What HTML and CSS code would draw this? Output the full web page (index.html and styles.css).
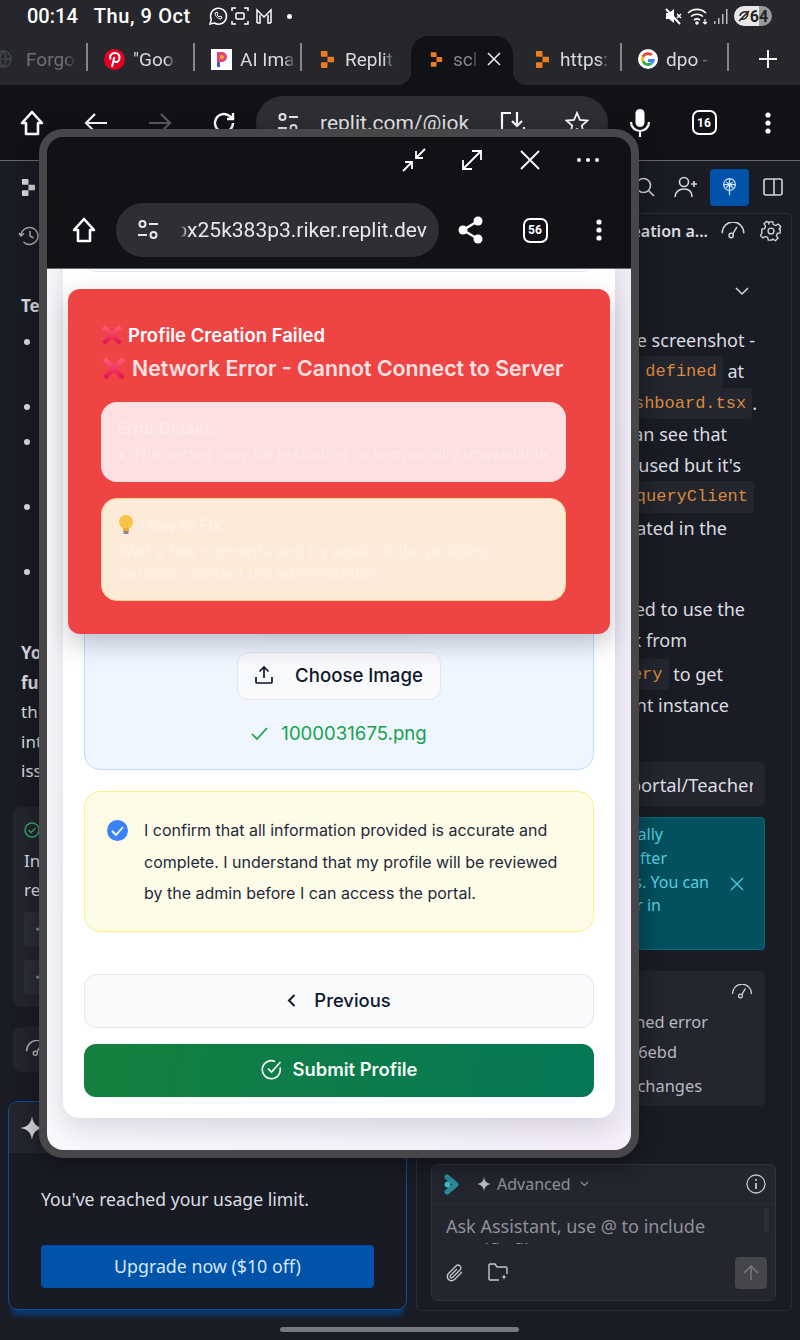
FILE: index.html
```html
<!DOCTYPE html>
<html>
<head>
  <meta charset="UTF-8">
  <meta name="viewport" content="width=device-width, initial-scale=1">
  <title>Profile Creation Failed</title>
  <link rel="stylesheet" href="styles.css">
</head>
<body>
  <!-- shared icons -->
  <svg class="defs">
    <defs>
      <linearGradient id="xGrad" x1="0" y1="0" x2="0" y2="1">
        <stop offset="0" stop-color="#ff5f7c"/>
        <stop offset="1" stop-color="#e2124f"/>
      </linearGradient>
      <symbol id="i-home" viewBox="0 0 28 28"><path d="M14 3 4 14h4v11h12V14h4z" fill="none" stroke="#fff" stroke-width="2.6" stroke-linejoin="round"/></symbol>
      <symbol id="i-tune" viewBox="0 0 24 24"><g fill="none" stroke="#e8e8ea" stroke-width="2"><circle cx="6.5" cy="6" r="3"/><path d="M13 6h9M2 17h9"/><circle cx="17.5" cy="17" r="3"/></g></symbol>
      <symbol id="i-dots" viewBox="0 0 24 24"><circle cx="12" cy="4" r="2.6" fill="#fff"/><circle cx="12" cy="12" r="2.6" fill="#fff"/><circle cx="12" cy="20" r="2.6" fill="#fff"/></symbol>
      <symbol id="i-replit" viewBox="0 0 16 20"><path d="M1 1h6a1 1 0 0 1 1 1v5H2a1 1 0 0 1-1-1zM8 7h6a1 1 0 0 1 1 1v4a1 1 0 0 1-1 1H8zM2 13h6v5a1 1 0 0 1-1 1H2a1 1 0 0 1-1-1v-4a1 1 0 0 1 1-1z" fill="currentColor"/></symbol>
      <symbol id="i-gauge" viewBox="0 0 28 20"><g fill="none" stroke="currentColor" stroke-width="1.6" stroke-linecap="round"><path d="M2 12A12 12 0 0 1 26 12"/><circle cx="12" cy="15" r="2.4"/><path d="m14 13 4-7"/></g></symbol>
      <symbol id="i-x" viewBox="0 0 24 24"><path d="M3 3 21 21M21 3 3 21" fill="none" stroke="url(#xGrad)" stroke-width="4.5"/></symbol>
      <symbol id="i-spark" viewBox="0 0 24 24"><path d="M12 1c1 7 4 10 11 11-7 1-10 4-11 11-1-7-4-10-11-11 7-1 10-4 11-11z" fill="currentColor"/></symbol>
    </defs>
  </svg>

  <div class="statusbar">
    <div class="status-left">
      <span class="clock">00:14</span>
      <span class="date">Thu, 9 Oct</span>
      <svg class="st-icons" width="68" height="20" viewBox="0 0 68 20" fill="none" stroke="#fff" stroke-width="1.5">
        <path d="M2 18l1.3-4.4A8 8 0 1 1 6.4 17z"/><path d="M7 7c0 3 3 6 6 6l1-2-2-1-1 1-2-2 1-1-1-2z" stroke-width="1"/>
        <path d="M24 5V2h4M36 2h4v3M40 15v3h-4M28 18h-4v-3"/><rect x="28" y="7" width="8" height="6" rx="1"/>
        <path d="M49 17V4l7 7 7-7v13M49 17h3V9M63 17h-3V9"/>
      </svg>
      <span class="st-dot"></span>
    </div>
    <div class="status-right">
      <svg width="20" height="20" viewBox="0 0 20 20"><path d="M3 7h3l5-4v14l-5-4H3z" fill="#fff"/><path d="m3 3 14 15" stroke="#fff" stroke-width="2"/><path d="m14 8 4 4m0-4-4 4" stroke="#fff" stroke-width="1.4"/></svg>
      <svg width="22" height="20" viewBox="0 0 22 20" fill="none" stroke="#fff" stroke-width="1.6"><path d="M1 7a13 13 0 0 1 18 0M4 10.500a9 9 0 0 1 12 0M7 14a5 5 0 0 1 6 0"/><circle cx="10" cy="17" r="1" fill="#fff"/><path d="M18 13v5m-2-2 2 2 2-2" stroke-width="1.200"/></svg>
      <svg width="16" height="20" viewBox="0 0 16 20"><path d="M1 15h1.500v3H1zM5 12h1.500v6H5zM9 8h1.500v10H9zM13 3h1.500v15H13z" fill="#b9babd"/></svg>
      <span class="battery"><svg width="12" height="12" viewBox="0 0 12 12"><path d="M1 11 11 1M2 6c0-3 4-5 8-4 0 5-3 8-7 7" fill="none" stroke="#222" stroke-width="1.500"/></svg>64</span>
    </div>
  </div>

  <div class="tabs">
    <div class="tab tab-first"><svg class="fav" width="18" height="18" viewBox="0 0 18 18" fill="none" stroke="#44464c" stroke-width="1.500"><circle cx="9" cy="9" r="8"/><path d="M1 9h16M9 1c4 5 4 11 0 16M9 1c-4 5-4 11 0 16"/></svg><span class="tab-title dim">Forgo</span></div>
    <div class="tab"><svg class="fav" width="21" height="21" viewBox="0 0 21 21"><circle cx="10.500" cy="10.500" r="10.500" fill="#e60023"/><path d="M8 18l2.300-10M6.500 10.500C5 6 8 4 11 4s5 2 4.500 5.500S12 14 10 12" fill="none" stroke="#fff" stroke-width="2"/></svg><span class="tab-title">"Goo</span></div>
    <div class="tab"><svg class="fav" width="21" height="21" viewBox="0 0 21 21"><rect width="21" height="21" fill="#fff"/><path d="M6 3h5a5 5 0 0 1 0 10H9v5H6z" fill="#e0457b"/><path d="M9 6h2a2 2 0 0 1 0 4H9z" fill="#f5a623"/><path d="M6 13h3v5H6z" fill="#3b5bdb"/></svg><span class="tab-title">AI Ima</span></div>
    <div class="tab tab-replit"><svg class="fav" width="15" height="19"><use href="#i-replit"/></svg><span class="tab-title">Replit</span></div>
    <div class="tab tab-active tab-replit"><svg class="fav" width="13" height="17"><use href="#i-replit"/></svg><span class="tab-title short">scl</span>
      <svg class="tab-x" width="14" height="14" viewBox="0 0 14 14"><path d="m1 1 12 12M13 1 1 13" stroke="#e8e8ea" stroke-width="1.600"/></svg></div>
    <div class="tab tab-replit tab-after"><svg class="fav" width="15" height="19"><use href="#i-replit"/></svg><span class="tab-title">https:</span></div>
    <div class="tab"><svg class="fav" width="20" height="20" viewBox="0 0 20 20"><circle cx="10" cy="10" r="10" fill="#fff"/><path d="M10 6a4 4 0 0 1 2.800 1.100l2-2A7 7 0 0 0 3.700 7l2.400 1.800A4 4 0 0 1 10 6z" fill="#ea4335"/><path d="M6.100 8.800 3.700 7a7 7 0 0 0 0 6l2.400-1.800a4 4 0 0 1 0-2.400z" fill="#fbbc05"/><path d="M10 14a4 4 0 0 1-3.900-2.800L3.700 13a7 7 0 0 0 11 2.100l-2.300-1.800A4 4 0 0 1 10 14z" fill="#34a853"/><path d="M17 10h-7v3h4a3 3 0 0 1-1.600 0.300l2.300 1.800A7 7 0 0 0 17 10z" fill="#4285f4"/></svg><span class="tab-title">dpo -</span></div>
    <div class="tab-plus"><svg width="20" height="20" viewBox="0 0 20 20"><path d="M10 1v18M1 10h18" stroke="#f2f2f2" stroke-width="2"/></svg></div>
  </div>

  <div class="toolbar">
    <div class="tool"><svg width="28" height="28"><use href="#i-home"/></svg></div>
    <div class="tool"><svg width="26" height="24" viewBox="0 0 26 24" fill="none" stroke="#fff" stroke-width="2.200"><path d="M24 12H3M12 3l-9 9 9 9"/></svg></div>
    <div class="tool"><svg width="26" height="24" viewBox="0 0 26 24" fill="none" stroke="#5b5c61" stroke-width="2.200"><path d="M2 12h21M14 3l9 9-9 9"/></svg></div>
    <div class="tool"><svg width="26" height="26" viewBox="0 0 26 26" fill="none" stroke="#fff" stroke-width="2.400"><path d="M22 13a9 9 0 1 1-3-6.700L22 9M22 3v6h-6"/></svg></div>
    <div class="url-pill">
      <div class="tool"><svg width="24" height="24"><use href="#i-tune"/></svg></div>
      <span class="url-text">replit.com/@jok</span>
      <div class="pill-end">
        <svg width="28" height="26" viewBox="0 0 28 26" fill="none" stroke="#fff" stroke-width="2.200"><path d="M12 3H3v20h22v-6M18 2v14M13 11l5 5 5-5"/></svg>
        <svg width="24" height="24" viewBox="0 0 24 24" fill="none" stroke="#fff" stroke-width="1.800"><path d="m12 2 3 7 7.500.6-5.700 5 1.800 7.400L12 18l-6.600 4 1.800-7.400-5.700-5L9 9z"/></svg>
      </div>
    </div>
    <div class="tool"><svg width="22" height="30" viewBox="0 0 22 30"><rect x="6.500" y="1" width="9" height="18" rx="4.500" fill="#fff"/><path d="M2 14a9 9 0 0 0 18 0M11 23v6" fill="none" stroke="#fff" stroke-width="2.200"/></svg></div>
    <div class="tool"><span class="tab-count">16</span></div>
    <div class="tool"><svg width="24" height="24"><use href="#i-dots"/></svg></div>
  </div>

  <div class="replit">
    <div class="topbar">
      <svg class="top-logo" width="15" height="19"><use href="#i-replit"/></svg>
      <div class="top-right">
        <svg width="20" height="20" viewBox="0 0 20 20" fill="none" stroke="#d5d6da" stroke-width="1.600"><circle cx="8.500" cy="8.500" r="7"/><path d="m14 14 5 5"/></svg>
        <svg class="top-invite" width="24" height="22" viewBox="0 0 24 22" fill="none" stroke="#d5d6da" stroke-width="1.600"><circle cx="10" cy="6" r="4.500"/><path d="M1 21c0-5 4-8 9-8s8 3 8 8M20 5v6M17 8h6"/></svg>
        <span class="top-blue"><svg width="15" height="20" viewBox="0 0 18 22" fill="none" stroke="#cfe2f8" stroke-width="1.500"><circle cx="9" cy="8" r="7"/><path d="M2 8h14M9 1v20M5 5c2 3 6 3 8 0M5 12l4-4 4 4"/></svg></span>
        <svg class="top-split" width="20" height="20" viewBox="0 0 20 20" fill="none" stroke="#d5d6da" stroke-width="1.600"><rect x="1" y="2" width="18" height="16" rx="2"/><path d="M11 2v16"/></svg>
      </div>
    </div>

    <div class="workspace">
      <div class="left-pane">
        <svg class="history" width="22" height="20" viewBox="0 0 22 20" fill="none" stroke="#a9abb2" stroke-width="1.500"><path d="M3 10a8.500 8.500 0 1 1 2.500 6M1 7l2 3 3-2.500M12 5v5l3.500 2"/></svg>
        <p class="left-head">Te</p>
        <ul class="left-list">
          <li class="li-two"></li>
          <li></li>
          <li class="li-two"></li>
          <li class="li-two"></li>
          <li class="li-two"></li>
        </ul>
        <p class="left-para"><b>Yo<br>fu</b><br>th<br>int<br>iss</p>
        <div class="check-card">
          <svg width="16" height="16" viewBox="0 0 16 16" fill="none" stroke="#2fb36f" stroke-width="1.300"><circle cx="8" cy="8" r="7"/><path d="m4.500 8 2.500 2.500 4.500-4.500"/></svg>
          <p class="check-text">In<br>re</p>
          <div class="check-sub">✓</div>
          <div class="check-sub">✓</div>
        </div>
        <div class="gauge-card"><svg width="24" height="18"><use href="#i-gauge"/></svg></div>
        <div class="limit">
          <div class="limit-head"><svg width="26" height="26"><use href="#i-spark"/></svg></div>
          <p class="limit-text">You've reached your usage limit.</p>
          <div class="limit-btn">Upgrade now ($10 off)</div>
        </div>
      </div>

      <div class="right-pane">
        <div class="pane-head">
          <span class="pane-title">eation a...</span>
          <svg class="pane-gauge" width="26" height="18"><use href="#i-gauge"/></svg>
          <svg width="22" height="22" viewBox="0 0 24 24" fill="none" stroke="#d5d6da" stroke-width="1.500"><circle cx="12" cy="12" r="3.200"/><path d="M10 2h4l.6 3 2.600 1.100 2.600-1.700 2.800 2.800-1.700 2.600L22 10v4l-3 .6-1.100 2.600 1.700 2.600-2.800 2.800-2.600-1.700-.6.100-.6 1h-4l-.6-3-2.600-1.100-2.600 1.700-2.800-2.800 1.700-2.600L2 14v-4l3-.6 1.100-2.600-1.700-2.600 2.800-2.800 2.600 1.700L9.400 5z"/></svg>
        </div>
        <div class="pane-chevron"><svg width="14" height="9" viewBox="0 0 14 9" fill="none" stroke="#d5d6da" stroke-width="1.500"><path d="m1 1 6 6 6-6"/></svg></div>

        <div class="chat">
          <p class="ln e10">e screenshot -</p>
          <p class="ln e21"><code class="code">defined</code>&nbsp;at</p>
          <p class="ln e8"><code class="code">shboard.tsx</code>.</p>
          <p class="ln e38">an see that</p>
          <p class="ln e24">used but it's</p>
          <p class="ln e11"><code class="code">queryClient</code></p>
          <p class="ln e38">ated in the</p>
          <p class="ln gap-line"></p>
          <p class="ln e20">ed to use the</p>
          <p class="ln e78">k from</p>
          <p class="ln e42 code-line"><code class="code">ery</code>&nbsp;to get</p>
          <p class="ln e36">nt instance</p>
        </div>

        <div class="path-box"><span class="path-clip"><span class="path-text">portal/Teacher</span></span></div>

        <div class="teal-box">
          <div class="teal-lines">
            <p class="ln t2">ally</p>
            <p class="ln t1">after</p>
            <p class="ln t3">s. You can</p>
            <p class="ln t4">r in</p>
          </div>
          <svg class="teal-x" width="14" height="14" viewBox="0 0 14 14"><path d="m1 1 12 12M13 1 1 13" stroke="#4fcbdc" stroke-width="1.400"/></svg>
        </div>

        <div class="result-card">
          <svg class="result-gauge" width="22" height="16"><use href="#i-gauge"/></svg>
          <p class="ln r1">ined error</p>
          <p class="ln r2">6ebd</p>
          <p class="ln r3">changes</p>
        </div>

        <div class="composer">
          <div class="composer-head">
            <svg class="composer-logo" width="15" height="21" viewBox="0 0 15 21"><path d="M3 3 12 10.500 3 18" fill="none" stroke="#2a8c9a" stroke-width="5" stroke-linecap="round" stroke-linejoin="round"/><circle cx="3.500" cy="10.500" r="3" fill="#3fb6c6"/></svg>
            <svg class="composer-spark" width="16" height="16"><use href="#i-spark"/></svg>
            <span class="composer-mode">Advanced</span>
            <svg width="9" height="6" viewBox="0 0 9 6" fill="none" stroke="#8f9199" stroke-width="1.200"><path d="m1 1 3.500 3.500L8 1"/></svg>
            <svg class="composer-info" width="20" height="20" viewBox="0 0 20 20" fill="none" stroke="#c5c6cb" stroke-width="1.300"><circle cx="10" cy="10" r="9"/><path d="M10 9v6M10 5v1.800" stroke-width="1.800"/></svg>
          </div>
          <div class="composer-input">Ask Assistant, use @ to include<br>specific files</div>
          <div class="composer-foot">
            <svg width="20" height="20" viewBox="0 0 20 20" fill="none" stroke="#c5c6cb" stroke-width="1.400"><path d="M17 9 9.500 16.500a4 4 0 0 1-6-6L11 3a2.700 2.700 0 0 1 4 4l-7.500 7.500a1.300 1.300 0 0 1-2-2L12 6"/></svg>
            <svg class="foot-folder" width="21" height="20" viewBox="0 0 21 20" fill="none" stroke="#c5c6cb" stroke-width="1.400"><path d="M11 17H2a1 1 0 0 1-1-1V2a1 1 0 0 1 1-1h5l2 3h9a1 1 0 0 1 1 1v6"/><path d="M16 11c.3 2 1 2.700 3 3-2 .3-2.700 1-3 3-.3-2-1-2.700-3-3 2-.3 2.700-1 3-3z" fill="#c5c6cb" stroke="none"/></svg>
            <span class="send"><svg width="16" height="16" viewBox="0 0 16 16" fill="none" stroke="#77787d" stroke-width="1.500"><path d="M8 15V1M1 8l7-7 7 7"/></svg></span>
          </div>
        </div>
      </div>
    </div>
  </div>

  <div class="home-bar"></div>

  <!-- floating preview window -->
  <div class="window">
    <div class="win-head">
      <div class="win-controls">
        <span class="win-ctl"><svg width="26" height="26" viewBox="0 0 26 26" fill="none" stroke="#fff" stroke-width="1.800"><path d="M24 2 15 11M15 4v7h7M2 24l9-9M4 15h7v7"/></svg></span>
        <span class="win-ctl"><svg width="24" height="24" viewBox="0 0 24 24" fill="none" stroke="#fff" stroke-width="1.800"><path d="M3 21 21 3M12 3h9v9M3 12v9h9"/></svg></span>
        <span class="win-ctl"><svg width="22" height="22" viewBox="0 0 22 22" fill="none" stroke="#fff" stroke-width="1.800"><path d="m2 2 18 18M20 2 2 20"/></svg></span>
        <span class="win-ctl"><svg width="24" height="6" viewBox="0 0 24 6" fill="#fff"><circle cx="3" cy="3" r="2"/><circle cx="12" cy="3" r="2"/><circle cx="21" cy="3" r="2"/></svg></span>
      </div>
      <div class="win-bar">
        <div class="win-home"><svg width="28" height="28"><use href="#i-home"/></svg></div>
        <div class="win-pill">
          <div class="tool"><svg width="24" height="24"><use href="#i-tune"/></svg></div>
          <div class="win-url"><span>ox25k383p3.riker.replit.dev</span></div>
        </div>
        <div class="tool"><svg width="26" height="28" viewBox="0 0 26 28" fill="#fff"><circle cx="20" cy="5" r="4.500"/><circle cx="20" cy="23" r="4.500"/><circle cx="5" cy="14" r="4.500"/><path d="M20 5 5 14l15 9" fill="none" stroke="#fff" stroke-width="2.400"/></svg></div>
        <div class="tool"><span class="tab-count">56</span></div>
        <div class="tool"><svg width="24" height="24"><use href="#i-dots"/></svg></div>
      </div>
    </div>

    <div class="win-page">
      <div class="card">
        <div class="prev-field"></div>

        <div class="upload-box">
          <div class="preview"></div>
          <button class="choose-btn">
            <svg width="18" height="18" viewBox="0 0 18 18" fill="none" stroke="#0f172a" stroke-width="1.700"><path d="M1 11v5a1 1 0 0 0 1 1h14a1 1 0 0 0 1-1v-5M9 12V1M4.500 5.500 9 1l4.500 4.500"/></svg>
            <span>Choose Image</span>
          </button>
          <div class="file-name">
            <svg width="17" height="13" viewBox="0 0 17 13" fill="none" stroke="#16a34a" stroke-width="1.700"><path d="m1 7 5 5L16 1"/></svg>
            <span>1000031675.png</span>
          </div>
        </div>

        <div class="confirm-box">
          <span class="confirm-check"><svg width="13" height="10" viewBox="0 0 13 10" fill="none" stroke="#fff" stroke-width="1.800"><path d="m1 5 4 4 7-8"/></svg></span>
          <p>I confirm that all information provided is accurate and complete. I understand that my profile will be reviewed by the admin before I can access the portal.</p>
        </div>

        <button class="btn-prev">
          <svg width="9" height="13" viewBox="0 0 9 13" fill="none" stroke="#0f172a" stroke-width="2"><path d="M7.500 1 2 6.500 7.500 12"/></svg>
          <span>Previous</span>
        </button>
        <button class="btn-submit">
          <svg width="21" height="21" viewBox="0 0 21 21" fill="none" stroke="#fff" stroke-width="1.600"><path d="M19 8.500A9 9 0 1 1 14 2.500M7 9.500l3.500 3.500L19.500 3"/></svg>
          <span>Submit Profile</span>
        </button>
      </div>
    </div>

    <div class="toast">
      <div class="toast-title"><svg width="22" height="22"><use href="#i-x"/></svg><span>Profile Creation Failed</span></div>
      <div class="toast-error"><svg width="26" height="25"><use href="#i-x"/></svg><span>Network Error - Cannot Connect to Server</span></div>
      <div class="toast-details">
        <p class="details-title">Error Details:</p>
        <p class="details-item"><span class="bullet">•</span>The server may be restarting or temporarily unavailable</p>
      </div>
      <div class="toast-tips">
        <p class="tips-title"><svg width="16" height="20" viewBox="0 0 16 20"><circle cx="8" cy="7" r="7" fill="#fbc24a"/><path d="M5 13h6v3H5z" fill="#f0a830"/><path d="M5.500 16h5v3h-5z" fill="#8a8a94"/></svg><span>How to Fix:</span></p>
        <p class="tips-text">Wait a few moments and try again. If the problem persists, contact the administrator.</p>
      </div>
    </div>
  </div>
</body>
</html>
```

FILE: styles.css
```css
* {
  box-sizing: border-box;
}

html, body {
  margin: 0;
  padding: 0;
}

body {
  position: relative;
  width: 800px;
  height: 1340px;
  overflow: hidden;
  background-color: #1a1c25;
  font-family: "Noto Sans", sans-serif;
  color: #dcdde2;
}

p {
  margin: 0;
}

.defs {
  position: absolute;
  width: 0;
  height: 0;
}

/* status bar */
.statusbar {
  height: 36px;
  background-color: #25272c;
  padding: 0 28px 4px 27px;
  display: flex;
  justify-content: space-between;
  align-items: center;
  font-family: Roboto, sans-serif;
  font-weight: 500;
  font-size: 20px;
  color: #fff;
}

.status-left, .status-right {
  display: flex;
  align-items: center;
}

.date {
  margin-left: 16px;
  letter-spacing: 0.6px;
}

.st-icons {
  margin-left: 17px;
}

.st-dot {
  width: 5px;
  height: 5px;
  margin-left: 11px;
  border-radius: 50%;
  background-color: #fff;
}

.status-right {
  gap: 4px;
}

.battery {
  display: flex;
  align-items: center;
  justify-content: center;
  width: 38px;
  height: 20px;
  margin-left: 1px;
  border-radius: 10px;
  background: linear-gradient(90deg, #e8e8e8 65%, #9a9a9a 65%);
  color: #222;
  font-size: 16px;
  font-weight: 700;
}

/* tabs */
.tabs {
  height: 49px;
  background-color: #25272c;
  display: flex;
  font-family: Roboto, sans-serif;
  font-size: 19px;
  color: #d9dadd;
}

.tab {
  position: relative;
  width: 107px;
  flex: none;
  display: flex;
  align-items: center;
  padding: 0 0 3px 16px;
  gap: 8px;
}

.tab::after {
  content: "";
  position: absolute;
  right: 0;
  top: 7px;
  height: 28px;
  width: 2px;
  background-color: #85868a;
}

.tab-first {
  width: 88px;
  padding-left: 0;
  gap: 14px;
}

.tab-first .fav {
  margin-left: -6px;
}

.tab-title {
  white-space: nowrap;
  -webkit-mask-image: linear-gradient(90deg, #000 80%, rgba(0, 0, 0, 0.15));
  mask-image: linear-gradient(90deg, #000 80%, rgba(0, 0, 0, 0.15));
}

.dim {
  color: #6f7075;
}

.tab-replit {
  padding-left: 18px;
}

.tab-replit .fav {
  color: #ee7a22;
  margin-right: 2px;
}

.tab-active {
  width: 102px;
  margin-left: 2px;
  padding-left: 19px;
  background-color: #111216;
  border-radius: 18px 18px 0 0;
}

.tab-active .tab-title {
  color: #85868a;
}

.tab:nth-child(4)::after {
  display: none;
}

/* flared corners of the active tab */
.tab-active::before, .tab-active::after {
  content: "";
  display: block;
  position: absolute;
  top: auto;
  bottom: 0;
  width: 14px;
  height: 14px;
  background-color: transparent;
}

.tab-active::before {
  left: -14px;
  background: radial-gradient(circle at 0 0, transparent 14px, #111216 14.500px);
}

.tab-active::after {
  right: -14px;
  background: radial-gradient(circle at 100% 0, transparent 14px, #111216 14.500px);
}

.tab-x {
  margin-left: 2px;
}

.tab-after {
  width: 109px;
  padding-left: 22px;
}

.tab-plus {
  margin-left: 29px;
  padding-bottom: 3px;
  display: flex;
  align-items: center;
}

/* browser toolbar */
.toolbar {
  height: 76px;
  background-color: #111216;
  border-bottom: 1px solid #6a6b70;
  display: flex;
  align-items: center;
  font-family: Roboto, sans-serif;
}

.tool {
  width: 64px;
  flex: none;
  display: flex;
  align-items: center;
  justify-content: center;
}

.url-pill {
  width: 352px;
  height: 54px;
  flex: none;
  border-radius: 27px;
  background-color: #2e2f33;
  display: flex;
  align-items: center;
}

.url-text {
  font-size: 21px;
  color: #e8e8ea;
  white-space: nowrap;
}

.pill-end {
  margin-left: auto;
  width: 128px;
  display: flex;
  justify-content: space-around;
  align-items: center;
}

.tab-count {
  width: 25px;
  height: 25px;
  border: 2.500px solid #fff;
  border-radius: 7px;
  display: flex;
  align-items: center;
  justify-content: center;
  font-size: 12px;
  font-weight: 700;
  color: #fff;
}

/* replit editor */
.topbar {
  height: 52px;
  display: flex;
  align-items: center;
  padding: 0 17px 0 21px;
  justify-content: space-between;
}

.top-logo {
  color: #d5d6da;
}

.top-right {
  display: flex;
  align-items: center;
}

.top-invite {
  margin-left: 19px;
}

.top-blue {
  width: 39px;
  height: 37px;
  margin-left: 12px;
  border-radius: 4px;
  background-color: #0053a8;
  display: flex;
  align-items: center;
  justify-content: center;
}

.top-split {
  margin-left: 14px;
}

.workspace {
  display: flex;
  padding: 0 8px;
  gap: 9px;
}

.left-pane {
  width: 399px;
  flex: none;
  display: flex;
  flex-direction: column;
  font-size: 17px;
}

.history {
  margin: 13px 0 0 10px;
}

.left-head {
  margin: 45px 0 0 13px;
  font-weight: 700;
  line-height: 30px;
}

.left-list {
  list-style: none;
  margin: 0;
  padding: 6px 0 0 37px;
  display: flex;
  flex-direction: column;
  gap: 5px;
}

.left-list li {
  position: relative;
  height: 30px;
}

.left-list .li-two {
  height: 60px;
}

.left-list li::before {
  content: "";
  position: absolute;
  left: -21px;
  top: 12px;
  width: 6px;
  height: 6px;
  border-radius: 50%;
  background-color: #dcdde2;
}

.left-para {
  margin: 21px 0 0 13px;
  line-height: 29.500px;
}

.check-card {
  margin: 21px 0 0 5px;
  height: 200px;
  padding: 13px 11px;
  border-radius: 8px;
  background-color: #23252f;
}

.check-text {
  line-height: 29px;
  margin-top: 3px;
}

.check-sub {
  height: 35px;
  margin-top: 13px;
  padding: 5px 10px;
  border-radius: 4px;
  background-color: #2b2d38;
  color: #9a9ca3;
  font-size: 14px;
}

.check-sub:first-of-type {
  margin-top: 8px;
}

.gauge-card {
  margin: 20px 0 0 5px;
  height: 45px;
  padding: 13px 12px;
  border-radius: 8px;
  background-color: #23252f;
  color: #b8bac0;
}

.limit {
  margin-top: 29px;
  height: 209px;
  border: 1px solid #0f4f9a;
  border-radius: 10px;
  box-shadow: 0 9px 5px -3px #0d3768;
  background-color: #191b24;
}

.limit-head {
  height: 51px;
  padding: 13px 10px;
  background-color: #23252f;
  border-radius: 9px 9px 0 0;
  color: #d8d8dc;
}

.limit-text {
  margin: 34px 0 0 32px;
  font-size: 17.650px;
  line-height: 24px;
  color: #dcdde2;
}

.limit-btn {
  margin: 34px 0 0 32px;
  width: 333px;
  height: 43px;
  border-radius: 4px;
  background-color: #0053a8;
  color: #d5e6fb;
  font-size: 17.800px;
  display: flex;
  align-items: center;
  justify-content: center;
}

.right-pane {
  width: 376px;
  height: 1098px;
  flex: none;
  border: 1px solid #2b2e39;
  border-radius: 6px;
  overflow: hidden;
  display: flex;
  flex-direction: column;
  font-size: 18px;
  position: relative;
}

.pane-head {
  height: 34px;
  padding-right: 9px;
  display: flex;
  align-items: center;
  justify-content: flex-end;
  font-size: 16px;
  font-weight: 600;
  white-space: nowrap;
}

.pane-gauge {
  margin: 0 14px 0 12px;
  color: #d5d6da;
}

.pane-chevron {
  height: 26px;
  margin-top: 30px;
  padding-right: 42px;
  display: flex;
  justify-content: flex-end;
  align-items: center;
}

.chat {
  margin-top: 21px;
  padding-right: 26px;
  line-height: 31.300px;
}

.ln {
  display: flex;
  justify-content: flex-end;
  align-items: center;
  white-space: nowrap;
}

.e8 { padding-right: 8px; }
.e10 { padding-right: 10px; }
.e11 { padding-right: 11px; }
.e20 { padding-right: 20px; }
.e21 { padding-right: 21px; }
.e24 { padding-right: 24px; }
.e36 { padding-right: 36px; }
.e38 { padding-right: 38px; }
.e42 { padding-right: 42px; }
.e78 { padding-right: 78px; }

.gap-line {
  height: 50px;
}

.code-line {
  margin-top: 2px;
}

.code {
  font-family: "Liberation Mono", monospace;
  font-size: 17px;
  color: #d98a3d;
  background-color: #23252f;
  border-radius: 4px;
  padding: 0 6px;
}

.path-box {
  margin: 41px 26px 0 40px;
  height: 44px;
  padding-right: 12px;
  border-radius: 6px;
  background-color: #23252f;
  display: flex;
  justify-content: flex-end;
  align-items: center;
  white-space: nowrap;
  font-size: 18.400px;
}

.path-clip {
  width: 130px;
  overflow: hidden;
  display: flex;
  justify-content: flex-end;
}

.path-text {
  flex: none;
  margin-right: -3px;
}

.teal-box {
  margin: 11px 26px 0 40px;
  height: 133px;
  border: 1px solid #0a6a7a;
  border-radius: 4px;
  background-color: #03505f;
  color: #54cfe0;
  font-size: 16px;
  position: relative;
  padding-top: 5px;
}

.teal-lines {
  line-height: 23.700px;
}

.t1 { padding-right: 97px; }
.t2 { padding-right: 101px; }
.t3 { padding-right: 55px; }
.t4 { padding-right: 103px; }

.teal-x {
  position: absolute;
  right: 20px;
  top: 59px;
}

.result-card {
  margin: 21px 26px 0 40px;
  height: 135px;
  border-radius: 6px;
  background-color: #23252f;
  color: #b8bac0;
  font-size: 16.400px;
  position: relative;
  padding-top: 39px;
}

.result-gauge {
  position: absolute;
  right: 12px;
  top: 13px;
  color: #d5d6da;
}

.r1 { padding-right: 57px; line-height: 24px; }
.r2 { padding-right: 88px; line-height: 24px; margin-top: 6px; }
.r3 { padding-right: 63px; line-height: 24px; margin-top: 10px; }

.composer {
  position: absolute;
  left: 14px;
  top: 950px;
  width: 345px;
  height: 137px;
  border: 1px solid #30323e;
  border-radius: 6px;
  background-color: #23252f;
}

.composer-head {
  height: 39px;
  padding: 0 9px 0 12px;
  border-bottom: 1px solid #2b2d38;
  display: flex;
  align-items: center;
}

.composer-spark {
  margin-left: 17px;
  color: #b8bac0;
}

.composer-mode {
  margin: 0 9px 0 5px;
  font-size: 16px;
  color: #8f9199;
}

.composer-info {
  margin-left: auto;
}

.composer-input {
  position: relative;
  height: 40px;
  padding: 10px 14px 0;
  overflow: hidden;
  font-size: 18px;
  line-height: 24px;
  color: #8f9199;
  white-space: nowrap;
}

/* scrollbar thumb of the input */
.composer-input::after {
  content: "";
  position: absolute;
  right: 6px;
  top: 4px;
  width: 5px;
  height: 24px;
  background-color: #2b2d38;
}

.composer-foot {
  height: 55px;
  padding: 3px 8px 0 13px;
  display: flex;
  align-items: center;
}

.foot-folder {
  margin-left: 23px;
}

.send {
  width: 32px;
  height: 32px;
  margin-left: auto;
  border-radius: 4px;
  background-color: #45464a;
  display: flex;
  align-items: center;
  justify-content: center;
}

.home-bar {
  position: absolute;
  left: 280px;
  top: 1327px;
  width: 239px;
  height: 5px;
  border-radius: 3px;
  background-color: #77787d;
}

/* floating window */
.window {
  position: absolute;
  left: 39px;
  top: 129px;
  width: 600px;
  height: 1029px;
  border: 8px solid #47474a;
  border-radius: 24px;
  overflow: hidden;
  background-color: #111216;
  display: flex;
  flex-direction: column;
  font-family: Inter, sans-serif;
  box-shadow: 0 6px 24px rgba(0, 0, 0, 0.4);
}

.win-head {
  height: 132px;
  flex: none;
  border-bottom: 1px solid #6a6b70;
  font-family: Roboto, sans-serif;
}

.win-controls {
  height: 46px;
  padding-right: 14px;
  display: flex;
  justify-content: flex-end;
  align-items: center;
}

.win-ctl {
  width: 58px;
  display: flex;
  justify-content: center;
  align-items: center;
}

.win-bar {
  margin-top: 20px;
  height: 54px;
  display: flex;
  align-items: center;
}

.win-home {
  width: 69px;
  flex: none;
  display: flex;
  justify-content: center;
  padding-left: 5px;
}

.win-pill {
  width: 323px;
  height: 54px;
  flex: none;
  border-radius: 27px;
  background-color: #2e2f33;
  display: flex;
  align-items: center;
}

.win-url {
  width: 247px;
  flex: none;
  display: flex;
  justify-content: flex-end;
  overflow: hidden;
  white-space: nowrap;
  font-size: 21px;
  color: #e8e8ea;
  -webkit-mask-image: linear-gradient(90deg, transparent, #000 8px);
  mask-image: linear-gradient(90deg, transparent, #000 8px);
}

.win-page {
  flex: 1;
  min-height: 0;
  overflow: hidden;
  display: flex;
  flex-direction: column;
  justify-content: flex-end;
  padding: 0 16px 32px;
  background: linear-gradient(100deg, #fcfcfe, #f5f0fb);
}

.card {
  flex: none;
  padding: 0 21px 21px;
  border-radius: 16px;
  background-color: #fff;
  box-shadow: 0 10px 30px rgba(30, 30, 60, 0.16);
  display: flex;
  flex-direction: column;
}

.prev-field {
  height: 60px;
  border: 1px solid #e2e8f0;
  border-radius: 12px;
}

.upload-box {
  margin-top: 28px;
  height: 470px;
  border: 1px solid #bfdbfe;
  border-radius: 16px;
  background-color: #eff6ff;
  display: flex;
  flex-direction: column;
  align-items: center;
  justify-content: flex-end;
  padding-bottom: 24px;
}

.preview {
  width: 160px;
  height: 120px;
  margin-bottom: 30px;
  border-radius: 12px;
  background-color: #e2e8f0;
  box-shadow: 0 4px 16px rgba(30, 40, 70, 0.25);
}

.choose-btn {
  width: 204px;
  height: 48px;
  padding: 0 0 3px;
  border: 1px solid #e2e8f0;
  border-radius: 12px;
  background-color: #f8fafc;
  font-family: Inter, sans-serif;
  font-size: 18.600px;
  font-weight: 500;
  color: #0f172a;
  display: flex;
  align-items: center;
  justify-content: center;
  gap: 22px;
}

.file-name {
  margin-top: 21px;
  height: 24px;
  display: flex;
  align-items: center;
  gap: 13px;
  font-size: 18.600px;
  color: #16a34a;
}

.confirm-box {
  margin-top: 21px;
  height: 141px;
  padding: 23px 22px 0;
  border: 1px solid #fef08a;
  border-radius: 16px;
  background-color: #fefce8;
  display: flex;
  gap: 16px;
}

.confirm-box p {
  font-size: 16px;
  line-height: 31.500px;
  color: #1e293b;
}

.confirm-check {
  width: 21px;
  height: 21px;
  flex: none;
  margin-top: 5px;
  border-radius: 50%;
  background-color: #3b82f6;
  display: flex;
  align-items: center;
  justify-content: center;
}

.btn-prev, .btn-submit {
  width: 510px;
  border-radius: 12px;
  font-family: Inter, sans-serif;
  font-size: 18.400px;
  font-weight: 500;
  display: flex;
  align-items: center;
  justify-content: center;
}

.btn-prev {
  height: 54px;
  margin-top: 42px;
  padding: 0 0 2px;
  gap: 18px;
  border: 1px solid #e2e8f0;
  background-color: #f8fafc;
  color: #0f172a;
}

.btn-submit {
  height: 53px;
  margin-top: 16px;
  padding: 0 0 3px;
  gap: 11px;
  border: none;
  background: linear-gradient(100deg, #15803d, #047857);
  color: #f4fbf7;
  font-weight: 600;
}

/* toast sits over the form */
.toast {
  position: absolute;
  left: 21px;
  top: 152px;
  width: 542px;
  height: 345px;
  padding: 34px 44px 0 33px;
  border-radius: 12px;
  background-color: #ef4444;
  box-shadow: 0 10px 24px rgba(30, 30, 60, 0.25);
}

.toast-title {
  display: flex;
  align-items: center;
  height: 24px;
  font-size: 18.500px;
  font-weight: 600;
  color: #fff;
}

.toast-title span {
  margin-left: 5px;
}

.toast-error {
  display: flex;
  align-items: center;
  height: 30px;
  margin-top: 6px;
  font-size: 21.300px;
  font-weight: 600;
  color: #fee2e2;
  white-space: nowrap;
}

.toast-error span {
  margin-left: 5px;
}

.toast-details {
  margin-top: 19px;
  height: 80px;
  padding: 15px 16px 0;
  border-radius: 16px;
  background-color: #fde0e2;
  color: #fde9ea;
}

.details-title {
  font-size: 16px;
  font-weight: 600;
  line-height: 22px;
}

.details-item {
  margin-top: 6px;
  font-size: 15.900px;
  line-height: 20px;
  white-space: nowrap;
}

.bullet {
  display: inline-block;
  width: 15px;
}

.toast-tips {
  margin-top: 16px;
  height: 103px;
  padding: 15px 16px 0;
  border: 1px solid #fcd38d;
  border-radius: 16px;
  background-color: #fdebd9;
  color: #fdf0e6;
}

.tips-title {
  display: flex;
  align-items: center;
  gap: 7px;
  height: 22px;
  font-size: 16px;
  font-weight: 600;
}

.tips-text {
  margin-top: 4px;
  font-size: 16px;
  line-height: 22px;
}
```
